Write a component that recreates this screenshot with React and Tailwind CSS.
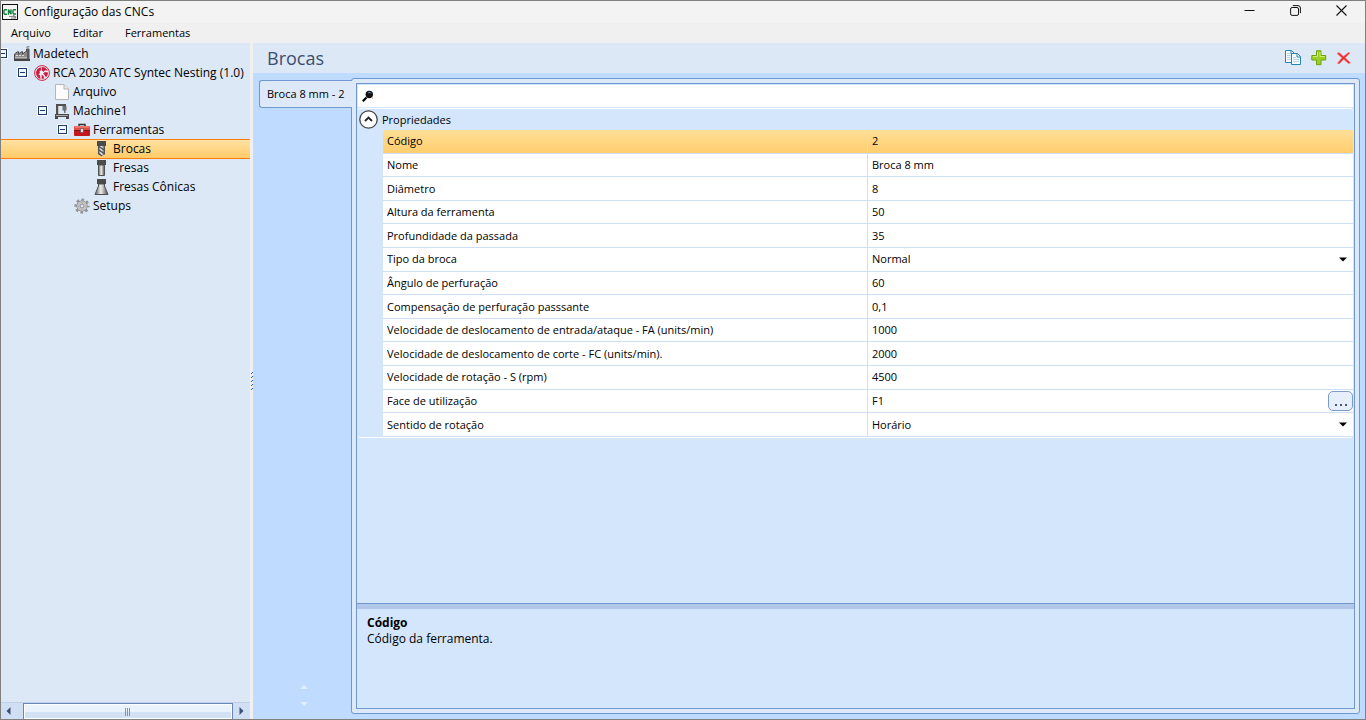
import React from "react";

const rows = [
  { id: "codigo", name: "Código", value: "2" },
  { id: "nome", name: "Nome", value: "Broca 8 mm" },
  { id: "diametro", name: "Diâmetro", value: "8" },
  { id: "altura", name: "Altura da ferramenta", value: "50" },
  { id: "profundidade", name: "Profundidade da passada", value: "35" },
  { id: "tipo", name: "Tipo da broca", value: "Normal", kind: "select" },
  { id: "angulo", name: "Ângulo de perfuração", value: "60" },
  { id: "compensacao", name: "Compensação de perfuração passsante", value: "0,1" },
  { id: "fa", name: "Velocidade de deslocamento de entrada/ataque - FA (units/min)", value: "1000" },
  { id: "fc", name: "Velocidade de deslocamento de corte - FC (units/min).", value: "2000" },
  { id: "rpm", name: "Velocidade de rotação - S (rpm)", value: "4500" },
  { id: "face", name: "Face de utilização", value: "F1", kind: "browse" },
  { id: "sentido", name: "Sentido de rotação", value: "Horário", kind: "select" },
];

function AppIcon() {
  return (
    <svg width="16" height="16" viewBox="0 0 16 16" aria-hidden="true">
      <rect x=".5" y=".5" width="15" height="15" fill="#f4f4f4" stroke="#111" />
      <path d="M5 5.700H2.700L2 6.500v3l.7.8H5M6.500 10.800V5.500L9 10.300V5.200M14 5.700h-2.300l-.7.8v2.700l.7.8H14" fill="none" stroke="#15803d" strokeWidth="1.400" />
      <path d="M7 12.500h7M9 14h5M11 11l3 3" stroke="#8a8a8a" strokeWidth="1.200" />
    </svg>
  );
}

function FactoryIcon() {
  return (
    <svg width="16" height="16" viewBox="0 0 16 16" aria-hidden="true">
      <path d="M13 2V.8h2.500" fill="none" stroke="#777" />
      <path d="M.5 13.500V8l3-2.300h1V8l3-2.300h1V8l3-2.300h1V3h2.500v10.500z" fill="#8a8a8a" stroke="#4c4c4c" />
      <path d="M13 3.500h2v10h-2z" fill="#5a5a5a" />
      <path d="M2 9.500h9" stroke="#d8d8d8" strokeDasharray="2 1" />
      <path d="M1 11.500h12" stroke="#b8b8b8" />
      <path d="M0 14h16" stroke="#444" strokeWidth="2" />
    </svg>
  );
}

function BrandIcon() {
  return (
    <svg width="16" height="16" viewBox="0 0 16 16" aria-hidden="true">
      <circle cx="8" cy="8" r="7.400" fill="#f3eef6" stroke="#c8203f" strokeWidth="1" />
      <path d="M6.500 2.200C3.500 3 2 5.500 2 8c0 3 2 5.300 4.500 6L6 10.500 4.500 9l1.500-1-.5-2 2-.8z" fill="#c8203f" />
      <path d="M7.500 2c3-.2 5.500 1.500 6.200 4l-2.700-.8L9.500 7 8 5.500zM9 8.500L11 7l3 .5c0 2-.8 3.500-2 4.700L10.500 10zM7.500 9.500L9.500 11l.8 2.500-2.500.5z" fill="#c8203f" />
    </svg>
  );
}

function FileIcon() {
  return (
    <svg width="16" height="16" viewBox="0 0 16 16" aria-hidden="true">
      <path d="M1.500.5h8.500L14.500 5v10.500h-13z" fill="#fcfcfc" stroke="#b5b5b5" />
      <path d="M10 .5V5h4.500" fill="#e8e8e8" stroke="#b5b5b5" />
    </svg>
  );
}

function MachineIcon() {
  return (
    <svg width="16" height="16" viewBox="0 0 16 16" aria-hidden="true">
      <path d="M3 12V2h8v3.500" fill="none" stroke="#505050" strokeWidth="2" />
      <path d="M8.500 3h4v4.500h-4zM10 7.500h1.500V10H10z" fill="#6e6e6e" />
      <path d="M4.500 3v9" stroke="#c5c5c5" />
      <rect x="1.500" y="11.500" width="13" height="2" fill="#aaa" stroke="#484848" />
      <path d="M1 15h3M12 15h3" stroke="#484848" strokeWidth="2" />
    </svg>
  );
}

function ToolboxIcon() {
  return (
    <svg width="16" height="16" viewBox="0 0 16 16" aria-hidden="true">
      <path d="M5 4V2.500h6V4" fill="none" stroke="#333" strokeWidth="1.500" />
      <rect x="0" y="4" width="16" height="5" rx="1" fill="#e34b45" />
      <rect x="0" y="8" width="16" height="6" rx="1" fill="#c4161c" />
      <path d="M1 5h14" stroke="#f49a92" />
      <path d="M0 8.500h16" stroke="#8c1014" />
      <path d="M6.500 6.500h3v4h-3z" fill="#dcdcdc" stroke="#555" strokeWidth=".7" />
    </svg>
  );
}

function Metal({ id }) {
  return (
    <linearGradient id={id}>
      <stop offset="0" stopColor="#606060" />
      <stop offset=".45" stopColor="#eeeeee" />
      <stop offset="1" stopColor="#4e4e4e" />
    </linearGradient>
  );
}

function DrillIcon() {
  return (
    <svg width="16" height="16" viewBox="0 0 16 16" aria-hidden="true">
      <defs><Metal id="metalDrill" /></defs>
      <path d="M5 5h7v8l-3.500 3L5 13z" fill="url(#metalDrill)" />
      <path d="M5 5l7 4.500M5 8.500l7 4.500M5 12l4 3" stroke="#484848" strokeWidth="1.200" />
      <path d="M5.500 5v8M11.500 5v8" stroke="#555" />
      <path d="M4 0h9v5H4z" fill="#4b4b4b" />
    </svg>
  );
}

function MillIcon() {
  return (
    <svg width="16" height="16" viewBox="0 0 16 16" aria-hidden="true">
      <defs><Metal id="metalMill" /></defs>
      <path d="M5.500 5h6v10.500h-6z" fill="url(#metalMill)" stroke="#505050" />
      <path d="M4 0h9v5H4z" fill="#4b4b4b" />
    </svg>
  );
}

function ConeIcon() {
  return (
    <svg width="16" height="16" viewBox="0 0 16 16" aria-hidden="true">
      <defs><Metal id="metalCone" /></defs>
      <path d="M5.500 5h6v2l3.500 8.500H2L5.500 7z" fill="url(#metalCone)" stroke="#505050" />
      <path d="M4 0h9v5H4z" fill="#4b4b4b" />
    </svg>
  );
}

function GearIcon() {
  return (
    <svg width="16" height="16" viewBox="0 0 16 16" aria-hidden="true">
      <circle cx="8" cy="8" r="6.300" fill="none" stroke="#929292" strokeWidth="2.600" strokeDasharray="2.600 2.348" strokeDashoffset="1.300" />
      <circle cx="8" cy="8" r="5.200" fill="#d4d4d4" stroke="#929292" strokeWidth="1" />
      <circle cx="8" cy="8" r="3.600" fill="none" stroke="#b4b4b4" />
      <circle cx="8" cy="8" r="2" fill="#dce8f6" stroke="#8c8c8c" />
    </svg>
  );
}

function Toggle({ label }) {
  return (
    <button type="button" aria-label={label} className="flex h-[11px] w-[11px] shrink-0 items-center justify-center">
      <svg width="11" height="11" viewBox="0 0 11 11" aria-hidden="true">
        <rect x="0" y="0" width="11" height="11" fill="#fff" />
        <rect x="1.500" y="1.500" width="8" height="8" fill="#f4f8ff" stroke="#1c3a70" />
        <path d="M3 5.500h5" stroke="#1c3a70" />
      </svg>
    </button>
  );
}

const tree = [
  { label: "Madetech", icon: FactoryIcon, toggle: true, pad: "-ml-1" },
  { label: "RCA 2030 ATC Syntec Nesting (1.0)", icon: BrandIcon, toggle: true, pad: "pl-4" },
  { label: "Arquivo", icon: FileIcon, pad: "pl-[53px]" },
  { label: "Machine1", icon: MachineIcon, toggle: true, pad: "pl-9" },
  { label: "Ferramentas", icon: ToolboxIcon, toggle: true, pad: "pl-14" },
  { label: "Brocas", icon: DrillIcon, pad: "pl-[92px]", selected: true, wide: true },
  { label: "Fresas", icon: MillIcon, pad: "pl-[92px]", wide: true },
  { label: "Fresas Cônicas", icon: ConeIcon, pad: "pl-[92px]", wide: true },
  { label: "Setups", icon: GearIcon, pad: "pl-[73px]" },
];

function TreeItem({ item }) {
  const Icon = item.icon;
  return (
    <li
      role="treeitem"
      aria-selected={!!item.selected}
      className={
        item.selected
          ? "-mb-px h-5 border-y border-[#ff7a0f] bg-linear-to-b from-[#ffe2a2] to-[#ffcb66]"
          : "h-[19px]"
      }
    >
      <div className={"flex h-full items-center " + item.pad}>
        {item.toggle && (
          <span className="mr-[6px] flex">
            <Toggle label={"Recolher " + item.label} />
          </span>
        )}
        <button type="button" className={"flex items-center whitespace-nowrap " + (item.wide ? "gap-1" : "gap-[3px]")}>
          <Icon />
          <span>{item.label}</span>
        </button>
      </div>
    </li>
  );
}

function Sidebar() {
  return (
    <aside className="flex w-[249px] shrink-0 flex-col overflow-hidden bg-[#dde8f6]">
      <ul role="tree" aria-label="Máquinas" className="flex-1 pt-[1px] text-[12px] leading-4">
        {tree.map((item) => (
          <TreeItem key={item.label + item.pad} item={item} />
        ))}
      </ul>
      <div className="flex h-[17px] border-t border-[#bfd0ea] bg-[#d0dff4]">
        <button type="button" aria-label="Rolar para a esquerda" className="flex w-[22px] items-center pl-[5px]">
          <svg width="5" height="8" viewBox="0 0 5 8"><path d="M4.500 0v8L.5 4z" fill="#3d5078" /></svg>
        </button>
        <div className="flex flex-1 items-center justify-center border border-b-0 border-[#6886b8] bg-linear-to-b from-[#eaf2fb] from-50% to-[#d2e1f4] to-50% shadow-[inset_0_0_0_1px_#fff]">
          <svg width="6" height="8" viewBox="0 0 6 8"><path d="M.5 0v8M2.500 0v8M4.500 0v8" stroke="#7596c8" /></svg>
        </div>
        <button type="button" aria-label="Rolar para a direita" className="flex w-[17px] items-center pl-[6px]">
          <svg width="5" height="8" viewBox="0 0 5 8"><path d="M.5 0v8l4-4z" fill="#3d5078" /></svg>
        </button>
      </div>
    </aside>
  );
}

function PropertyRow({ row, selected }) {
  const bg = selected ? "bg-linear-to-b from-[#ffdf97] to-[#ffcd6b]" : "bg-white";
  return (
    <tr className={bg}>
      <th scope="row" className="border-r border-b border-[#cfe0f5] p-0 pl-1 text-left font-normal">
        <label htmlFor={row.id} className="block truncate">{row.name}</label>
      </th>
      <td className="border-b border-[#cfe0f5] p-0">
        <div className="flex h-5 items-center">
          {row.kind === "select" ? (
            <div className="grid flex-1 items-center">
              <select id={row.id} defaultValue={row.value} className="col-start-1 row-start-1 h-4 w-full appearance-none bg-transparent pl-1 outline-none">
                <option>{row.value}</option>
              </select>
              <svg className="pointer-events-none col-start-1 row-start-1 mr-[6px] justify-self-end" width="8" height="5" viewBox="0 0 8 5">
                <path d="M0 .5h8l-4 4z" fill="#000" />
              </svg>
            </div>
          ) : (
            <input id={row.id} defaultValue={row.value} className="h-4 w-full min-w-0 flex-1 bg-transparent pl-1 outline-none" />
          )}
          {row.kind === "browse" && (
            <button type="button" aria-label="Escolher face" className="flex h-5 w-[25px] items-center justify-center rounded-[5px] border border-[#7a9cc8] bg-[#e6effb]">
              <svg className="mt-2" width="14" height="2" viewBox="0 0 14 2">
                <path d="M1 0h2v2H1zM6 0h2v2H6zM11 0h2v2h-2z" fill="#4a5878" />
              </svg>
            </button>
          )}
        </div>
      </td>
    </tr>
  );
}

function PropertyGrid() {
  return (
    <div className="flex min-w-0 flex-1 rounded-[3px] border border-[#6f98d3] bg-[#dde9f8] p-1">
      <div className="flex min-w-0 flex-1 flex-col border border-[#6f98d3] bg-[#d4e6fc] text-[11px] leading-4">
        <div className="mx-[1px] mt-[1px] flex h-[22px] items-center gap-2 bg-white pl-1">
          <svg width="12" height="12" viewBox="0 0 12 12" aria-hidden="true">
            <path d="M.8 11.200L4.500 7.500" stroke="#000" strokeWidth="2.200" />
            <circle cx="7.300" cy="4.500" r="3.700" fill="#111" />
            <path d="M6 3l2-.8 1 1.300" fill="none" stroke="#7795b5" />
            <path d="M9.500 7.500l1.500 1" stroke="#c89a70" />
          </svg>
          <input type="search" aria-label="Pesquisar propriedades" className="h-4 flex-1 bg-transparent outline-none" />
        </div>
        <section className="mx-[1px] mt-[1px] rounded-[3px] border-t border-b border-white">
          <div className="flex h-[21px] items-center gap-1 pl-[1px]">
            <button type="button" aria-label="Recolher Propriedades" className="flex shrink-0">
              <svg width="19" height="19" viewBox="0 0 19 19">
                <circle cx="9.500" cy="9.500" r="8.700" fill="#fff" stroke="#444" strokeWidth="1.300" />
                <path d="M6 11l3.500-3.500L13 11" fill="none" stroke="#222" strokeWidth="1.800" />
              </svg>
            </button>
            <h2>Propriedades</h2>
          </div>
          <div className="flex pl-[25px]">
            <table className="h-[307px] w-full table-fixed border-separate border-spacing-0">
              <tbody>
                {rows.map((row, i) => (
                  <PropertyRow key={row.id} row={row} selected={i === 0} />
                ))}
              </tbody>
            </table>
          </div>
        </section>
        <div className="flex-1" />
        <div className="h-[6px] border-t border-[#6f98d3] bg-[#b0c6e6]" />
        <div className="h-[99px] px-[10px] pt-[6px] text-[12px]">
          <h3 className="font-bold">Código</h3>
          <p>Código da ferramenta.</p>
        </div>
      </div>
    </div>
  );
}

function Toolbar() {
  return (
    <header className="flex h-[30px] items-center justify-between bg-[#dde8f6] pr-[13px] pl-[14px]">
      <h1 className="text-[18px] leading-6 text-[#3b4f6e]">Brocas</h1>
      <div className="flex items-center gap-[9px]">
        <button type="button" aria-label="Duplicar">
          <svg width="17" height="16" viewBox="0 0 17 16">
            <path d="M.5.5h6L9.500 3.500v9h-9z" fill="#f5fbff" stroke="#2784b6" />
            <path d="M6 .5V4h3.500" fill="none" stroke="#2784b6" />
            <path d="M2 3.500h3M2 5.500h5M2 7.500h5M2 9.500h5" stroke="#b3d4e4" />
            <path d="M6.500 3.500h6l3 3v8h-9z" fill="#f5fbff" stroke="#2784b6" />
            <path d="M12 3.500V7h3.500" fill="none" stroke="#2784b6" />
            <path d="M8 7.500h3M8 9.500h6M8 11.500h6" stroke="#b3d4e4" />
          </svg>
        </button>
        <button type="button" aria-label="Adicionar">
          <svg width="16" height="16" viewBox="0 0 16 16">
            <path d="M5.500.8h4.500v4.700h4.700v4.500h-4.700v4.700h-4.500v-4.700H.8v-4.500h4.700z" fill="#9bcf20" stroke="#6fa012" />
            <path d="M6.500 2v4.500H2M9 2v4.500h4.700" fill="none" stroke="#cdec72" />
          </svg>
        </button>
        <button type="button" aria-label="Excluir">
          <svg width="16" height="16" viewBox="0 0 16 16">
            <path d="M1 3.500L3 2.500l4.500 4 5-4 1.500.5-4.800 4.700L14.500 13l-2 .5-4.800-4.300L3 14l-1.500-.8L6 7.700z" fill="#f22b2b" stroke="#f76a6a" strokeWidth=".5" />
          </svg>
        </button>
      </div>
    </header>
  );
}

function TitleBar() {
  return (
    <div className="flex h-[22px] items-center bg-[#f3f3f3] pl-[1px]">
      <AppIcon />
      <span className="flex-1 pl-[6px] text-[12px] leading-4">Configuração das CNCs</span>
      <div className="flex h-full pr-[1px] pb-[3px]">
        <button type="button" aria-label="Minimizar" className="flex w-[46px] items-center justify-center">
          <svg width="11" height="11" viewBox="0 0 11 11"><path d="M.5 5.500h10" stroke="#111" /></svg>
        </button>
        <button type="button" aria-label="Restaurar" className="flex w-[46px] items-center justify-center">
          <svg width="11" height="11" viewBox="0 0 11 11" fill="none" stroke="#111">
            <rect x=".6" y="2.500" width="7.900" height="7.900" rx="1.500" />
            <path d="M2.800.6H8A2.400 2.400 0 0 1 10.400 3v5.200" />
          </svg>
        </button>
        <button type="button" aria-label="Fechar" className="flex w-[46px] items-center justify-center">
          <svg width="11" height="11" viewBox="0 0 11 11"><path d="M.5.5l10 10M10.500.5l-10 10" stroke="#111" strokeWidth="1.100" /></svg>
        </button>
      </div>
    </div>
  );
}

export default function App() {
  return (
    <div className="flex h-screen flex-col overflow-hidden border border-[#808080] bg-[#f0f0f0] font-['Open_Sans','Noto_Sans',sans-serif] text-black">
      <TitleBar />
      <nav aria-label="Menu" className="flex h-5 shrink-0 items-center gap-[22px] pl-[10px] text-[11px] leading-4">
        <button type="button">Arquivo</button>
        <button type="button">Editar</button>
        <button type="button">Ferramentas</button>
      </nav>
      <div className="flex min-h-0 flex-1">
        <Sidebar />
        <div className="flex w-[3px] shrink-0 items-center">
          <svg width="3" height="18" viewBox="0 0 3 18" aria-hidden="true">
            <path d="M2 0h1v1H2zM1 1h1v1H1zM2 4h1v1H2zM1 5h1v1H1zM2 8h1v1H2zM1 9h1v1H1zM2 12h1v1H2zM1 13h1v1H1zM2 16h1v1H2zM1 17h1v1H1z" fill="#1763d6" />
          </svg>
        </div>
        <main className="flex min-w-0 flex-1 flex-col bg-[#bfdbff]">
          <Toolbar />
          <div className="flex min-h-0 flex-1 pt-[5px] pr-[5px] pb-[5px] pl-[6px]">
            <div className="z-10 -mr-[1px] flex w-[93px] shrink-0 flex-col justify-between pt-[2px]">
              <button type="button" className="h-7 rounded-l-[3px] border border-r-0 border-[#6f98d3] bg-[#dde9f8] pl-[7px] text-left text-[11px] leading-4 whitespace-nowrap">
                Broca 8 mm - 2
              </button>
              <div className="flex flex-col items-center gap-[13px] pb-2 pr-1">
                <button type="button" aria-label="Aba anterior">
                  <svg width="8" height="4" viewBox="0 0 8 4" className="block"><path d="M0 4h8L4 0z" fill="#e1eefd" /></svg>
                </button>
                <button type="button" aria-label="Próxima aba">
                  <svg width="8" height="4" viewBox="0 0 8 4" className="block"><path d="M0 0h8L4 4z" fill="#e1eefd" /></svg>
                </button>
              </div>
            </div>
            <PropertyGrid />
          </div>
        </main>
      </div>
    </div>
  );
}
